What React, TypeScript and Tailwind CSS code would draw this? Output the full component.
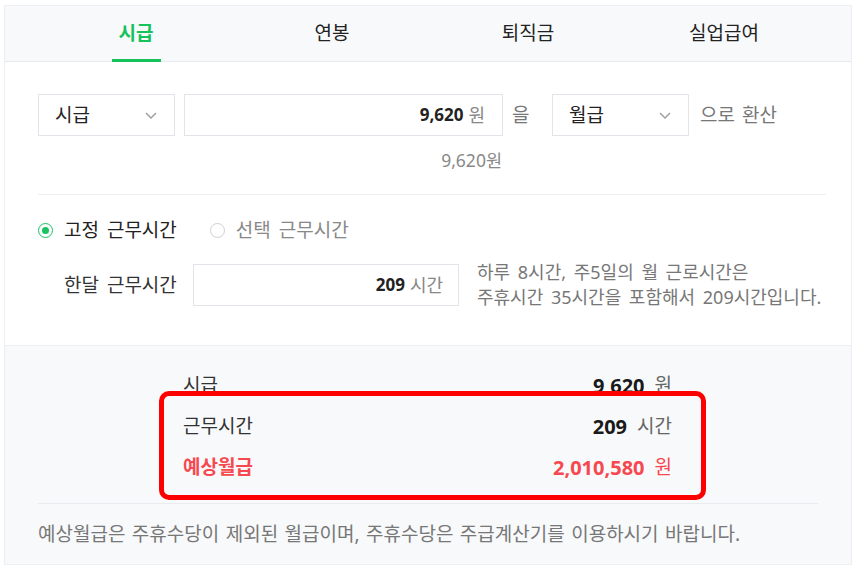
import React from "react";

const tabs = ["시급", "연봉", "퇴직금", "실업급여"];

const results = [
    { label: "시급", value: "9,620", unit: "원", accent: false },
    { label: "근무시간", value: "209", unit: "시간", accent: false },
    { label: "예상월급", value: "2,010,580", unit: "원", accent: true },
];

function Chevron() {
    return (
        <svg width="12" height="7" viewBox="0 0 12 7" fill="none" className="shrink-0">
            <polyline points="1,1 6,6 11,1" stroke="#a0a0a0" strokeWidth="1.5" />
        </svg>
    );
}

function Select({ value }: { value: string }) {
    return (
        <div className="flex h-[42px] w-[137px] shrink-0 items-center justify-between border border-[#e1e5ea] bg-white pl-[16px] pr-[17px]">
            <span className="text-[19px] text-[#222]">{value}</span>
            <Chevron />
        </div>
    );
}

function Radio({ checked, label }: { checked: boolean; label: string }) {
    return (
        <label className="flex items-center">
            {checked ? (
                <span className="flex h-[15px] w-[15px] items-center justify-center rounded-full border-[1.5px] border-[#19c260] bg-white">
                    <span className="h-[7px] w-[7px] rounded-full bg-[#19c260]" />
                </span>
            ) : (
                <span className="h-[15px] w-[15px] rounded-full border-[1.5px] border-[#cfcfcf] bg-white" />
            )}
            <span className={`ml-[11px] text-[19px] [word-spacing:3px] ${checked ? "text-[#222]" : "text-[#888]"}`}>
                {label}
            </span>
        </label>
    );
}

export default function App() {
    return (
        <div
            className="min-h-screen bg-white pl-[4px] pr-[7px] pt-[5px]"
            style={{ fontFamily: '"Noto Sans", "Noto Sans CJK KR", sans-serif' }}
        >
            <div className="border border-[#eceef1]">
                {/* Tabs */}
                <div className="grid h-[56px] grid-cols-4 border-b border-[#e6e9ed] bg-[#f8f9fb] pl-[33px] pr-[29px]">
                    {tabs.map((tab, i) => (
                        <div key={tab} className="relative flex items-center justify-center">
                            <span className={`text-[19px] ${i === 0 ? "font-bold text-[#16c25a]" : "text-[#222]"}`}>
                                {tab}
                            </span>
                            {i === 0 && (
                                <span className="absolute bottom-[-1px] h-[3px] w-[49px] bg-[#16c25a]" />
                            )}
                        </div>
                    ))}
                </div>

                {/* Converter */}
                <div className="border-b border-[#eceef1] pl-[33px] pr-[25px] pt-[32px] pb-[35px]">
                    <div className="flex items-center">
                        <Select value="시급" />
                        <div className="ml-[9px] flex h-[42px] w-[319px] items-center justify-end border border-[#e1e5ea] pr-[17px]">
                            <span className="text-[17px] font-bold text-[#222]">9,620</span>
                            <span className="ml-[5px] text-[18px] text-[#888]">원</span>
                        </div>
                        <span className="w-[49px] pl-[9px] text-[19px] text-[#777]">을</span>
                        <Select value="월급" />
                        <span className="ml-[11px] text-[19px] text-[#777] [word-spacing:2px]">으로 환산</span>
                    </div>
                    <div className="mt-[13px] w-[464px] text-right text-[17.5px] leading-[22px] text-[#888]">9,620원</div>

                    <div className="mt-[23px] h-px bg-[#eceef1]" />

                    <div className="mt-[25px] flex h-[20px] items-center gap-[33px]">
                        <Radio checked label="고정 근무시간" />
                        <Radio checked={false} label="선택 근무시간" />
                    </div>

                    <div className="mt-[20px] flex items-center">
                        <span className="w-[155px] pl-[26px] text-[19px] text-[#333] [word-spacing:3px]">한달 근무시간</span>
                        <div className="flex h-[42px] w-[266px] items-center justify-end border border-[#e1e5ea] pr-[15px]">
                            <span className="text-[17px] font-bold text-[#222]">209</span>
                            <span className="ml-[5px] text-[18px] text-[#888]">시간</span>
                        </div>
                        <p className="ml-[18px] text-[18px] leading-[25px] text-[#777] [word-spacing:3px]">
                            하루 8시간, 주5일의 월 근로시간은
                            <br />
                            주휴시간 35시간을 포함해서 209시간입니다.
                        </p>
                    </div>
                </div>

                {/* Results */}
                <div className="bg-[#f8f9fa] px-[33px] pt-[19px]">
                    <div className="relative mx-auto w-[490px]">
                        {results.map((r) => (
                            <div key={r.label} className="flex h-[41px] items-center justify-between">
                                <span className={`text-[19px] ${r.accent ? "font-bold text-[#f7474f]" : "text-[#333]"}`}>
                                    {r.label}
                                </span>
                                <span className="flex items-center pr-[1px]">
                                    <span className={`text-[20px] font-bold ${r.accent ? "text-[#f7474f]" : "text-[#1a1a1a]"}`}>
                                        {r.value}
                                    </span>
                                    <span className={`ml-[10px] text-[19px] ${r.accent ? "text-[#f7474f]" : "text-[#666]"}`}>
                                        {r.unit}
                                    </span>
                                </span>
                            </div>
                        ))}
                        {/* highlight */}
                        <div className="pointer-events-none absolute left-[-24px] top-[26px] h-[109px] w-[547px] rounded-[10px] border-[5px] border-[#ff0000]" />
                    </div>
                    <div className="mt-[15px] h-px bg-[#e9ecef]" />
                    <p className="pt-[18px] pb-[18px] text-[19px] leading-[24px] text-[#777] [word-spacing:1.5px]">
                        예상월급은 주휴수당이 제외된 월급이며, 주휴수당은 주급계산기를 이용하시기 바랍니다.
                    </p>
                </div>
            </div>
        </div>
    );
}
